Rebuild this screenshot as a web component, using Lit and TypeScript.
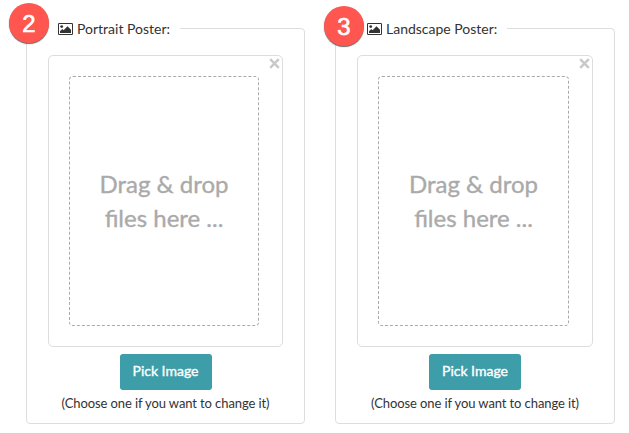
import { LitElement, html, css, svg } from "lit";
import { customElement, property } from "lit/decorators.js";

const pictureIcon = svg`
  <path fill-rule="evenodd" d="M1.2 0H13.8Q15 0 15 1.2V10.8Q15 12 13.8 12H1.2Q0 12 0 10.8V1.2Q0 0 1.2 0ZM1.3 1Q1 1 1 1.3V10.7Q1 11 1.3 11H13.7Q14 11 14 10.7V1.3Q14 1 13.7 1Z"/>
  <circle cx="3.7" cy="3.6" r="1.4"/>
  <path d="M2 10V8.2L4.3 5.9L5.6 7.2L9.5 3.2L13 6.7V10Z"/>`;

@customElement("poster-picker")
export class PosterPicker extends LitElement {
  @property() label = "";
  @property() step = "";

  static styles = css`
    :host { display: block; position: relative; }
    .card {
      box-sizing: border-box;
      height: 396px;
      border: 1px solid #ddd;
      border-radius: 4px;
      padding: 0 21px;
      display: flex;
      flex-direction: column;
      align-items: center;
    }
    .legend {
      align-self: flex-start;
      display: flex;
      align-items: center;
      height: 20px;
      margin: -10px 0 16px 0;
      padding: 0 10px;
      background: #fff;
      font-size: 14px;
      line-height: 20px;
      white-space: nowrap;
    }
    .icon { width: 15px; height: 12px; margin-right: 4px; fill: #333; }
    .panel {
      position: relative;
      box-sizing: border-box;
      align-self: stretch;
      height: 292px;
      border: 1px solid #ddd;
      border-radius: 5px;
      padding: 20px 23px 20px 20px;
    }
    .close {
      position: absolute;
      top: 2px;
      right: 2px;
      width: 11px;
      height: 11px;
      stroke: #c9c9c9;
      stroke-width: 2.5;
    }
    .drop {
      box-sizing: border-box;
      height: 250px;
      border: 1px dashed #aaa;
      border-radius: 4px;
      padding-bottom: 1px;
      display: flex;
      align-items: center;
      justify-content: center;
      text-align: center;
      color: #aaa;
      font-size: 24px;
      line-height: 34px;
      -webkit-text-stroke: 0.35px #aaa;
    }
    .pick {
      box-sizing: border-box;
      width: 92px;
      height: 36px;
      margin: 7px 0 0;
      padding: 0 0 2px;
      border: 0;
      border-radius: 3px;
      background: #3d9da9;
      color: #fff;
      font: 14px/34px Lato, sans-serif;
      -webkit-text-stroke: 0.35px #fff;
    }
    .hint {
      font-size: 13px;
      line-height: 18px;
      letter-spacing: -0.1px;
      margin-top: 4px;
      white-space: nowrap;
    }
    .badge {
      position: absolute;
      box-sizing: border-box;
      left: -17px;
      top: -25px;
      width: 40px;
      height: 40px;
      border-radius: 50%;
      background: #ff5650;
      box-shadow: 0 1px 1px rgba(0, 0, 0, 0.6);
      color: #fff;
      text-align: center;
      font: 24px/42px "Liberation Sans", Arial, sans-serif;
      -webkit-text-stroke: 0.6px #fff;
    }
    :host([step="3"]) .badge { left: -11px; top: -22px; }
  `;

  render() {
    return html`
      <div class="card">
        <div class="legend">
          <svg class="icon" viewBox="0 0 15 12">${pictureIcon}</svg>
          <span>${this.label}</span>
        </div>
        <div class="panel">
          <svg class="close" viewBox="0 0 11 11"><path d="M1.2 1.2L9.8 9.8M9.8 1.2L1.2 9.8" /></svg>
          <div class="drop"><span>Drag &amp; drop<br />files here ...</span></div>
        </div>
        <button class="pick">Pick Image</button>
        <div class="hint">(Choose one if you want to change it)</div>
      </div>
      <div class="badge">${this.step}</div>
    `;
  }
}

@customElement("app-root")
export class AppRoot extends LitElement {
  static styles = css`
    :host {
      display: grid;
      grid-template-columns: 279px 280px;
      column-gap: 30px;
      box-sizing: border-box;
      height: 433px;
      padding: 28px 0 0 26px;
      overflow: hidden;
      background: #fff;
      color: #333;
      font-family: Lato, sans-serif;
    }
  `;

  render() {
    return html`
      <poster-picker step="2" label="Portrait Poster:"></poster-picker>
      <poster-picker step="3" label="Landscape Poster:"></poster-picker>
    `;
  }
}
